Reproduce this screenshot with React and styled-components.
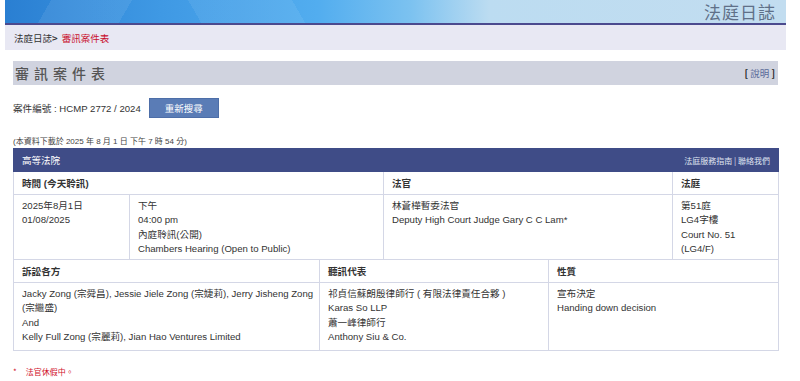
import styled, { createGlobalStyle } from 'styled-components';

const GlobalStyle = createGlobalStyle`
  body {
    margin: 0;
    background: #fff;
    font-family: "Liberation Sans", Arial, "Noto Sans CJK TC", sans-serif;
    color: #333;
  }
`;

const Page = styled.div`
  width: 781px;
  margin-left: 5px;
`;

const Banner = styled.div`
  height: 23px;
  display: flex;
  justify-content: flex-end;
  align-items: center;
  padding-right: 10px;
  border-bottom: 2px solid #4b4a8e;
  background:
    linear-gradient(120deg, transparent 0 40px, rgba(255,255,255,0.08) 40px 110px, transparent 110px),
    linear-gradient(60deg, transparent 0 170px, rgba(255,255,255,0.07) 170px 260px, transparent 260px),
    linear-gradient(90deg, #2a7fd2 0%, #3f99e4 20%, #52adef 40%, #7cc2f0 52%, #bcdcf1 62%, #c2ddf0 100%);
`;

const BannerTitle = styled.div`
  font-family: "Noto Sans CJK TC", sans-serif;
  font-size: 17px;
  line-height: 21px;
  color: #5f7088;
  letter-spacing: 1px;
`;

const Crumbs = styled.div`
  height: 25px;
  background: #e8e8f3;
  display: flex;
  align-items: center;
  padding-left: 9px;
  font-family: "Noto Sans CJK TC", sans-serif;
  font-size: 9.5px;
  color: #333;
`;

const Current = styled.span`
  color: #c8102e;
  margin-left: 4px;
`;

const Content = styled.div`
  padding: 11px 8px 0 8px;
`;

const TitleBar = styled.div`
  height: 24px;
  background: #d0d3df;
  display: flex;
  align-items: center;
  justify-content: space-between;
  padding: 0 3px 0 2px;
`;

const Title = styled.h1`
  margin: 0;
  font-family: "Noto Sans CJK TC", sans-serif;
  font-size: 14px;
  font-weight: 500;
  letter-spacing: 5px;
  color: #555;
`;

const Help = styled.div`
  font-family: "Noto Sans CJK TC", sans-serif;
  font-size: 9.5px;
  color: #5b6b9a;
  b { color: #222; }
`;

const CaseLine = styled.div`
  display: flex;
  align-items: center;
  gap: 8px;
  margin-top: 13px;
  font-size: 9.6px;
`;

const Button = styled.button`
  width: 70px;
  height: 20px;
  background: #5a7cb6;
  border: 1px solid #4d6ea8;
  color: #fff;
  font-family: "Noto Sans CJK TC", sans-serif;
  font-size: 9.5px;
  padding: 0;
`;

const Note = styled.div`
  margin-top: 18px;
  font-size: 8px;
  color: #444;
  height: 12px;
  line-height: 12px;
`;

const Table = styled.table`
  width: 100%;
  border-collapse: collapse;
  font-size: 9.6px;
  table-layout: fixed;
  td, th {
    border: 1px solid #d4d7e6;
    text-align: left;
    vertical-align: top;
  }
`;

const NavRow = styled.th`
  background: #3f4c87;
  color: #fff;
  height: 22px;
  padding: 0 8px;
  vertical-align: middle !important;
  font-weight: normal;
  font-family: "Noto Sans CJK TC", sans-serif;
  font-size: 9.5px;
  border-color: #3f4c87 !important;
`;

const NavInner = styled.div`
  display: flex;
  justify-content: space-between;
  align-items: center;
  span:last-child { font-size: 8px; color: #dfe3f0; }
`;

const HeadCell = styled.td`
  height: 22px;
  padding: 0 8px;
  vertical-align: middle !important;
  font-weight: bold;
  color: #333;
`;

const Cell = styled.td`
  padding: 4px 3px ${p => p.$pb ?? 3}px 8px;
  line-height: 14.3px;
  color: #333;
`;

const Footnote = styled.div`
  display: flex;
  gap: 9px;
  margin-top: 15px;
  font-family: "Noto Sans CJK TC", sans-serif;
  font-size: 8px;
  color: #d0102a;
`;

export default function App() {
  return (
    <Page>
      <GlobalStyle />
      <Banner>
        <BannerTitle>法庭日誌</BannerTitle>
      </Banner>
      <Crumbs>
        法庭日誌<b>&gt;</b>
        <Current>審訊案件表</Current>
      </Crumbs>
      <Content>
        <TitleBar>
          <Title>審訊案件表</Title>
          <Help><b>[</b> 說明 <b>]</b></Help>
        </TitleBar>
        <CaseLine>
          <span>案件編號 : HCMP 2772 / 2024</span>
          <Button>重新搜尋</Button>
        </CaseLine>
        <Note>(本資料下載於 2025 年 8 月 1 日 下午 7 時 54 分)</Note>
        <Table>
          <colgroup>
            <col style={{ width: '116px' }} />
            <col style={{ width: '190px' }} />
            <col style={{ width: '64px' }} />
            <col style={{ width: '165px' }} />
            <col style={{ width: '124px' }} />
            <col style={{ width: '106px' }} />
          </colgroup>
          <thead>
            <tr>
              <NavRow colSpan={6}>
                <NavInner>
                  <span>高等法院</span>
                  <span>法庭服務指南 | 聯絡我們</span>
                </NavInner>
              </NavRow>
            </tr>
          </thead>
          <tbody>
            <tr>
              <HeadCell colSpan={3}>時間 (今天聆訊)</HeadCell>
              <HeadCell colSpan={2}>法官</HeadCell>
              <HeadCell>法庭</HeadCell>
            </tr>
            <tr>
              <Cell>2025年8月1日<br />01/08/2025</Cell>
              <Cell colSpan={2}>
                下午<br />04:00 pm<br />內庭聆訊(公開)<br />Chambers Hearing (Open to Public)
              </Cell>
              <Cell colSpan={2}>林蒼樺暫委法官<br />Deputy High Court Judge Gary C C Lam*</Cell>
              <Cell>第51庭<br />LG4字樓<br />Court No. 51<br />(LG4/F)</Cell>
            </tr>
            <tr>
              <HeadCell colSpan={2}>訴訟各方</HeadCell>
              <HeadCell colSpan={2}>聽訊代表</HeadCell>
              <HeadCell colSpan={2}>性質</HeadCell>
            </tr>
            <tr>
              <Cell colSpan={2} $pb={6}>
                Jacky Zong (宗舜昌), Jessie Jiele Zong (宗婕莉), Jerry Jisheng Zong (宗繼盛)<br />
                And<br />
                Kelly Full Zong (宗麗莉), Jian Hao Ventures Limited
              </Cell>
              <Cell colSpan={2} $pb={6}>
                祁貞信蘇朗殷律師行 ( 有限法律責任合夥 )<br />
                Karas So LLP<br />
                蕭一峰律師行<br />
                Anthony Siu &amp; Co.
              </Cell>
              <Cell colSpan={2} $pb={6}>宣布決定<br />Handing down decision</Cell>
            </tr>
          </tbody>
        </Table>
        <Footnote>
          <span>*</span>
          <span>法官休假中。</span>
        </Footnote>
      </Content>
    </Page>
  );
}
